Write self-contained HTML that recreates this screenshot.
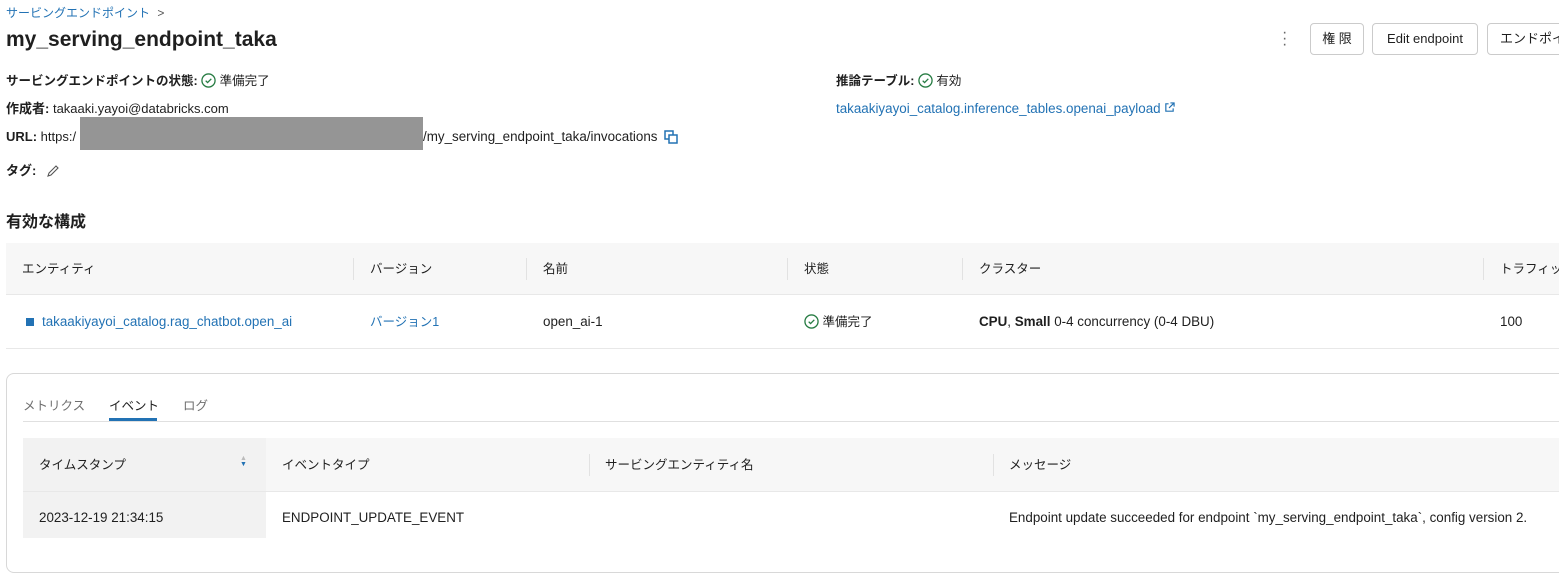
<!DOCTYPE html>
<html><head><meta charset="utf-8"><style>
*{margin:0;padding:0;box-sizing:border-box}
body{width:1559px;height:538px;overflow:hidden;background:#fff;font-family:"Liberation Sans","Noto Sans CJK JP",sans-serif;font-size:13px;line-height:16px;color:#1f1f1f;position:relative}
.a{position:absolute;white-space:nowrap;line-height:16px}
.lnk{color:#2272b4}
b{font-weight:bold}
.btn{position:absolute;top:23px;height:32px;border:1px solid #cbcbcb;border-radius:4px;font-size:13px;line-height:30px;text-align:center;background:#fff}
.hd{background:#f7f7f7}
.sep{position:absolute;width:1px;height:22px;background:#e2e2e2}
svg{vertical-align:-3px}
</style></head><body>
<div class="a lnk" style="left:6px;top:5px;font-size:12px">サービングエンドポイント <span style="color:#555;margin-left:4px">&gt;</span></div>
<div class="a" style="left:6px;top:28px;font-size:21px;line-height:24px;font-weight:bold">my_serving_endpoint_taka</div>
<div class="a" style="left:1282px;top:30px;color:#666;font-size:16px;line-height:6px">·<br>·<br>·</div>
<div class="btn" style="left:1310px;width:54px">権 限</div>
<div class="btn" style="left:1372px;width:106px">Edit endpoint</div>
<div class="btn" style="left:1487px;width:90px;text-align:left;padding-left:12px">エンドポイ</div>

<div class="a" style="left:6px;top:73px;font-size:12.5px"><b>サービングエンドポイントの状態:</b> <svg width="15" height="15" viewBox="0 0 16 16"><circle cx="8" cy="8" r="7" fill="none" stroke="#277c43" stroke-width="1.4"/><path d="M5 8.2l2 2 4-4" fill="none" stroke="#277c43" stroke-width="1.4"/></svg> 準備完了</div>
<div class="a" style="left:6px;top:101px"><b>作成者:</b> takaaki.yayoi@databricks.com</div>
<div class="a" style="left:6px;top:129px"><b>URL:</b> https:/</div>
<div class="a" style="left:80px;top:117px;width:343px;height:33px;background:#959595"></div>
<div class="a" style="left:423px;top:129px;font-size:13.4px">/my_serving_endpoint_taka/invocations <svg width="14" height="14" viewBox="0 0 14 14" style="margin-left:3px"><rect x="1" y="1" width="8" height="8" fill="none" stroke="#2272b4" stroke-width="1.5"/><rect x="5" y="5" width="8" height="8" fill="#fff" stroke="#2272b4" stroke-width="1.5"/></svg></div>
<div class="a" style="left:6px;top:163px"><b>タグ:</b> <svg width="14" height="14" viewBox="0 0 14 14" style="margin-left:6px"><path d="M2 12l1-3 7-7 2 2-7 7z" fill="none" stroke="#555" stroke-width="1.1"/></svg></div>

<div class="a" style="left:836px;top:73px;font-size:12.5px"><b>推論テーブル:</b> <svg width="15" height="15" viewBox="0 0 16 16"><circle cx="8" cy="8" r="7" fill="none" stroke="#277c43" stroke-width="1.4"/><path d="M5 8.2l2 2 4-4" fill="none" stroke="#277c43" stroke-width="1.4"/></svg> 有効</div>
<div class="a lnk" style="left:836px;top:101px;font-size:13.4px">takaakiyayoi_catalog.inference_tables.openai_payload <svg width="11" height="11" viewBox="0 0 12 12" style="vertical-align:0"><path d="M5 2H2v8h8V7M7 1h4v4M11 1L5.5 6.5" fill="none" stroke="#2272b4" stroke-width="1.3"/></svg></div>

<div class="a" style="left:6px;top:213px;font-size:16px;line-height:20px;font-weight:bold">有効な構成</div>
<div class="a hd" style="left:6px;top:243px;width:1553px;height:52px;border-bottom:1px solid #e8e8e8"></div>
<div class="a" style="left:22px;top:261px;font-size:12.5px">エンティティ</div>
<div class="sep" style="left:353px;top:258px"></div><div class="a" style="left:370px;top:261px;font-size:12.5px">バージョン</div>
<div class="sep" style="left:526px;top:258px"></div><div class="a" style="left:543px;top:261px;font-size:12.5px">名前</div>
<div class="sep" style="left:787px;top:258px"></div><div class="a" style="left:804px;top:261px;font-size:12.5px">状態</div>
<div class="sep" style="left:962px;top:258px"></div><div class="a" style="left:979px;top:261px;font-size:12.5px">クラスター</div>
<div class="sep" style="left:1483px;top:258px"></div><div class="a" style="left:1500px;top:261px;font-size:12.5px">トラフィッ</div>
<div class="a" style="left:6px;top:348px;width:1553px;height:1px;background:#e8e8e8"></div>
<div class="a lnk" style="left:26px;top:314px;font-size:13.4px"><span style="display:inline-block;width:8px;height:8px;background:#2272b4;margin-right:8px"></span>takaakiyayoi_catalog.rag_chatbot.open_ai</div>
<div class="a lnk" style="left:370px;top:314px;font-size:12.5px">バージョン1</div>
<div class="a" style="left:543px;top:314px;font-size:13.4px">open_ai-1</div>
<div class="a" style="left:804px;top:314px;font-size:12.5px"><svg width="15" height="15" viewBox="0 0 16 16"><circle cx="8" cy="8" r="7" fill="none" stroke="#277c43" stroke-width="1.4"/><path d="M5 8.2l2 2 4-4" fill="none" stroke="#277c43" stroke-width="1.4"/></svg> 準備完了</div>
<div class="a" style="left:979px;top:314px;font-size:13.4px"><b>CPU</b>, <b>Small</b> 0-4 concurrency (0-4 DBU)</div>
<div class="a" style="left:1500px;top:314px;font-size:13.4px">100</div>

<div class="a" style="left:6px;top:373px;width:1570px;height:200px;border:1px solid #d8d8d8;border-radius:8px"></div>
<div class="a" style="left:23px;top:398px;color:#6f6f6f;font-size:12.5px">メトリクス</div>
<div class="a" style="left:109px;top:398px;font-size:12.5px">イベント</div>
<div class="a" style="left:109px;top:418px;width:48px;height:3px;background:#2272b4"></div>
<div class="a" style="left:183px;top:398px;color:#6f6f6f;font-size:12.5px">ログ</div>
<div class="a" style="left:23px;top:421px;width:1540px;height:1px;background:#e0e0e0"></div>
<div class="a hd" style="left:23px;top:438px;width:1540px;height:53px"></div>
<div class="a" style="left:23px;top:438px;width:243px;height:100px;background:#f2f2f2"></div>
<div class="a" style="left:23px;top:491px;width:1540px;height:1px;background:#e8e8e8"></div>
<div class="a" style="left:39px;top:457px;font-size:12.5px">タイムスタンプ</div>
<div class="a" style="left:240px;top:456px;font-size:7px;line-height:6px;color:#bbb">▲<br><span style="color:#2272b4">▼</span></div>
<div class="a" style="left:282px;top:457px;font-size:12.5px">イベントタイプ</div>
<div class="sep" style="left:589px;top:454px"></div><div class="a" style="left:605px;top:457px;font-size:12.5px">サービングエンティティ名</div>
<div class="sep" style="left:993px;top:454px"></div><div class="a" style="left:1009px;top:457px;font-size:12.5px">メッセージ</div>
<div class="a" style="left:39px;top:510px;font-size:13.4px">2023-12-19 21:34:15</div>
<div class="a" style="left:282px;top:510px;font-size:13.4px">ENDPOINT_UPDATE_EVENT</div>
<div class="a" style="left:1009px;top:510px;font-size:13.4px">Endpoint update succeeded for endpoint `my_serving_endpoint_taka`, config version 2.</div>
</body></html>
